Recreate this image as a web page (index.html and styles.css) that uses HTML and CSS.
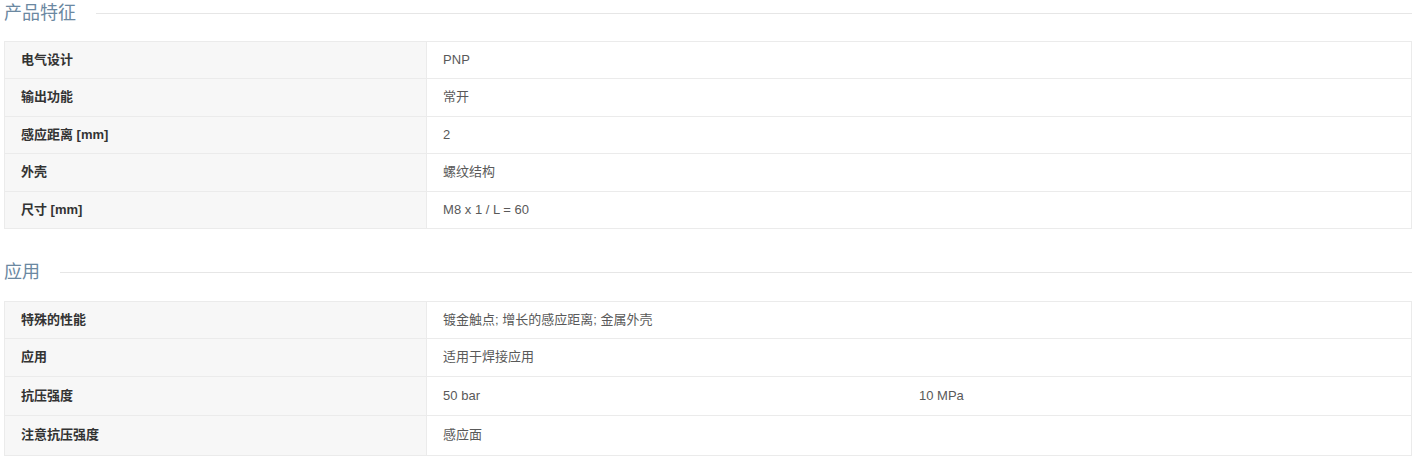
FILE: index.html
```html
<!DOCTYPE html>
<html lang="zh-CN">
<head>
<meta charset="utf-8">
<title>产品特征</title>
<link rel="stylesheet" href="styles.css">
</head>
<body>
<section class="section">
  <h2 class="section-title"><span>产品特征</span></h2>
  <table class="spec">
    <tr><th>电气设计</th><td>PNP</td></tr>
    <tr><th>输出功能</th><td>常开</td></tr>
    <tr><th>感应距离 [mm]</th><td>2</td></tr>
    <tr><th>外壳</th><td>螺纹结构</td></tr>
    <tr><th>尺寸 [mm]</th><td>M8 x 1 / L = 60</td></tr>
  </table>
</section>
<section class="section">
  <h2 class="section-title"><span>应用</span></h2>
  <table class="spec">
    <tr><th>特殊的性能</th><td>镀金触点; 增长的感应距离; 金属外壳</td></tr>
    <tr><th>应用</th><td>适用于焊接应用</td></tr>
    <tr><th>抗压强度</th><td><div class="split"><span>50 bar</span><span>10 MPa</span></div></td></tr>
    <tr><th>注意抗压强度</th><td><div class="split"><span>感应面</span></div></td></tr>
  </table>
</section>
</body>
</html>
```
FILE: styles.css
```css
html, body {
  margin: 0;
  padding: 0;
  background: #fff;
}
body {
  padding: 0 5px 0 4px;
  font-family: "Liberation Sans", Arial, "Noto Sans CJK SC", sans-serif;
  font-size: 13px;
  color: #555;
}
.section {
  margin-bottom: 30px;
}
.section:last-child {
  margin-bottom: 0;
}
.section-title {
  display: flex;
  align-items: center;
  gap: 20px;
  margin: 0 0 15px;
  font-size: 18px;
  font-weight: normal;
  line-height: 26px;
  color: #6b88a1;
}
.section:nth-child(2) .section-title {
  margin-bottom: 16px;
}
.section-title::after {
  content: "";
  flex: 1;
  height: 1px;
  background: #e6e6e6;
}
.spec {
  width: 100%;
  border-collapse: collapse;
  border: 1px solid #ebebeb;
}
.spec th, .spec td {
  border: 1px solid #ebebeb;
  padding: 9px 16px;
  line-height: 18.4px;
  text-align: left;
  vertical-align: middle;
}
.spec th {
  width: 30%;
  background: #f7f7f7;
  color: #333;
  font-weight: bold;
}
.spec td {
  color: #595959;
  background: #fff;
}
.split {
  display: grid;
  grid-template-columns: 1fr 1fr;
  padding: 1px 0;
}
```
